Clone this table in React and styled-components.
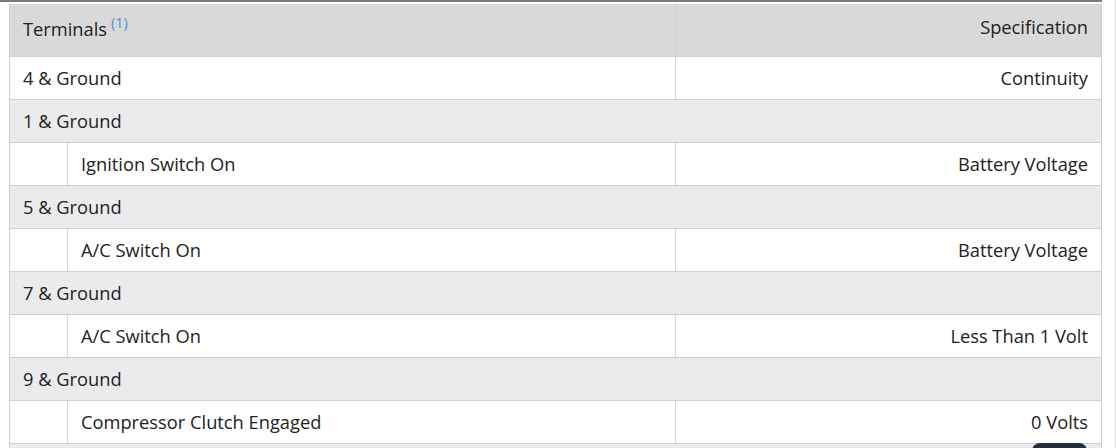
import React from "react";
import styled, { createGlobalStyle } from "styled-components";

const Global = createGlobalStyle`
  html, body { margin: 0; padding: 0; background: #fff; }
  body { font-family: "Open Sans", "Noto Sans", sans-serif; color: #222; overflow: hidden; }
`;

const Page = styled.div`
  width: 1116px;
  height: 448px;
  box-sizing: border-box;
  border-right: 1px solid #dcdcdc;
  position: relative;
  overflow: hidden;
`;

const Frame = styled.div`
  width: 1102px;
  box-sizing: border-box;
  border-top: 2px solid #7a7a7a;
  padding: 2px 0 0 9px;
`;

const Table = styled.table`
  width: 1093px;
  border-collapse: collapse;
  table-layout: fixed;
  font-size: 18.3px;
  line-height: 22px;
  border-left: 1px solid #d0d0d0;
  border-right: 1px solid #d0d0d0;
`;

const Cell = styled.td`
  border-top: 1px solid #cfcfcf;
  border-bottom: 1px solid #cfcfcf;
  border-left: ${(p) => (p.$divider ? "1px solid #d4d4d4" : "none")};
  padding: 0 13px;
  height: 43px;
  box-sizing: border-box;
  text-align: ${(p) => (p.$right ? "right" : "left")};
  vertical-align: middle;
  white-space: nowrap;
  background: ${(p) => (p.$group ? "#ebebed" : "#fff")};
`;

const HeadCell = styled.th`
  background: #d9d9d9;
  font-weight: 400;
  height: 52px;
  padding: 0 13px;
  text-align: ${(p) => (p.$right ? "right" : "left")};
  vertical-align: middle;
  border-left: ${(p) => (p.$divider ? "1px solid #cdcdcd" : "none")};
  border-bottom: 1px solid #cfcfcf;
`;

const HeadText = styled.span`
  position: relative;
  top: ${(p) => p.$shift || 0}px;
`;

const Note = styled.sup`
  color: #4a90d9;
  font-size: 14.5px;
  margin-left: 4px;
  vertical-align: 8px;
  line-height: 0;
`;

const FloatButton = styled.div`
  position: absolute;
  left: 1032px;
  top: 443px;
  width: 55px;
  height: 30px;
  border-radius: 8px;
  background: #1f2f3d;
`;

const rows = [
  { type: "pair", label: "4 & Ground", value: "Continuity" },
  { type: "group", label: "1 & Ground" },
  { type: "sub", label: "Ignition Switch On", value: "Battery Voltage" },
  { type: "group", label: "5 & Ground" },
  { type: "sub", label: "A/C Switch On", value: "Battery Voltage" },
  { type: "group", label: "7 & Ground" },
  { type: "sub", label: "A/C Switch On", value: "Less Than 1 Volt" },
  { type: "group", label: "9 & Ground" },
  { type: "sub", label: "Compressor Clutch Engaged", value: "0 Volts" },
  { type: "group", label: "" },
];

function Row({ row }) {
  if (row.type === "group") {
    return (
      <tr>
        <Cell $group colSpan={3}>{row.label}</Cell>
      </tr>
    );
  }
  if (row.type === "pair") {
    return (
      <tr>
        <Cell colSpan={2}>{row.label}</Cell>
        <Cell $divider $right>{row.value}</Cell>
      </tr>
    );
  }
  return (
    <tr>
      <Cell />
      <Cell $divider>{row.label}</Cell>
      <Cell $divider $right>{row.value}</Cell>
    </tr>
  );
}

export default function App() {
  return (
    <Page>
      <Global />
      <Frame>
        <Table>
          <colgroup>
            <col style={{ width: "58px" }} />
            <col style={{ width: "608px" }} />
            <col />
          </colgroup>
          <thead>
            <tr>
              <HeadCell colSpan={2}>
                <HeadText $shift={-1}>
                  Terminals<Note>(1)</Note>
                </HeadText>
              </HeadCell>
              <HeadCell $divider $right>
                <HeadText $shift={-3}>Specification</HeadText>
              </HeadCell>
            </tr>
          </thead>
          <tbody>
            {rows.map((r, i) => (
              <Row key={i} row={r} />
            ))}
          </tbody>
        </Table>
      </Frame>
      <FloatButton />
    </Page>
  );
}
